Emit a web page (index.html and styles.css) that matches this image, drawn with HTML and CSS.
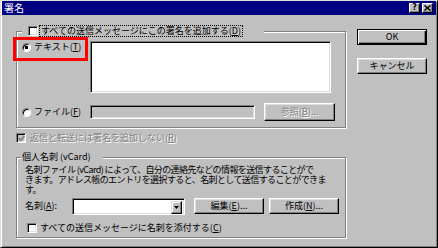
FILE: index.html
```html
<!DOCTYPE html>
<html lang="ja">
<head>
<meta charset="utf-8">
<title>署名</title>
<link rel="stylesheet" href="styles.css">
</head>
<body>
<div class="window">
  <div class="titlebar">
    <span class="title">署名</span>
    <div class="tbtns">
      <span class="tbtn">?</span>
      <span class="tbtn"><svg width="7" height="6" viewBox="0 0 7 6"><path d="M0.5 0.5 L6.5 5.5 M6.5 0.5 L0.5 5.5" stroke="#000" stroke-width="1.5" fill="none"/></svg></span>
    </div>
  </div>
  <div class="main">
    <div class="left">
      <fieldset class="group g1">
        <legend class="lg1"><span class="chk"></span><span class="focus">すべての送信メッセージにこの署名を追加する(<u>D</u>)</span></legend>
        <div class="g1grid">
          <div class="opt opt-top"><span class="radio on"></span>テキスト(<u>T</u>)</div>
          <div class="textbox"></div>
          <div class="opt"><span class="radio"></span>ファイル(<u>F</u>)</div>
          <div class="filerow">
            <div class="filefield"></div>
            <div class="btn browse dis">参照(<u>B</u>)...</div>
          </div>
        </div>
      </fieldset>
      <div class="chkrow dis reply"><span class="chk checked"><svg width="7" height="7" viewBox="0 0 7 7"><path d="M0.5 3 L2.7 5.3 L6.5 1" stroke="#808080" stroke-width="1.6" fill="none"/></svg></span>返信と転送には署名を追加しない(<u>R</u>)</div>
      <fieldset class="group g2">
        <legend class="lg2">個人名刺 (vCard)</legend>
        <div class="desc">
          <div class="dl">名刺ファイル (vCard) によって、自分の連絡先などの情報を送信することがで</div>
          <div class="dl">きます。アドレス帳のエントリを選択すると、名刺として送信することができま</div>
          <div class="dl">す。</div>
        </div>
        <div class="cardrow">
          <span class="cardlabel">名刺(<u>A</u>):</span>
          <div class="combo"><span class="arrow"><svg width="5" height="3" viewBox="0 0 5 3"><path d="M0 0 H5 L2.5 3 Z" fill="#000"/></svg></span></div>
          <div class="btn small edit">編集(<u>E</u>)...</div>
          <div class="btn small">作成(<u>N</u>)...</div>
        </div>
        <div class="chkrow attach"><span class="chk"></span>すべての送信メッセージに名刺を添付する(<u>C</u>)</div>
      </fieldset>
    </div>
    <div class="right">
      <div class="btn default">OK</div>
      <div class="btn">キャンセル</div>
    </div>
  </div>
  <div class="annot"></div>
</div>
</body>
</html>
```

FILE: styles.css
```css
* { box-sizing: border-box; }
html, body { margin: 0; background: #c0c0c0; }
body {
  font-family: "Noto Sans CJK JP", "Noto Sans", sans-serif;
  font-size: 9px;
  line-height: 12px;
  color: #000;
}
u { text-decoration: underline; text-underline-offset: 1px; text-decoration-thickness: 1px; }

.window {
  position: relative;
  width: 438px;
  height: 248px;
  background: #c0c0c0;
  border: 1px solid;
  border-color: #dfdfdf #000 #000 #dfdfdf;
  box-shadow: inset 1px 1px #fff, inset -1px -1px #808080;
  padding: 0 1px 1px 1px;
}

.titlebar {
  height: 14px;
  background: #000080;
  display: flex;
  align-items: center;
  justify-content: space-between;
  padding: 0 3px 0 2px;
}
.title { color: #fff; font-size: 10px; line-height: 12px; }
.tbtns { display: flex; gap: 2px; }
.tbtn {
  width: 11px;
  height: 10px;
  background: #c0c0c0;
  border: 1px solid;
  border-color: #fff #000 #000 #fff;
  box-shadow: inset -1px -1px #808080;
  display: flex;
  align-items: center;
  justify-content: center;
  font: bold 8px/8px "DejaVu Sans", sans-serif;
}

.main { display: flex; padding: 10px 0 0 14px; }
.left { width: 331px; }
.right {
  margin-left: 10px;
  padding-top: 4px;
  display: flex;
  flex-direction: column;
  gap: 13px;
}

.btn {
  width: 70px;
  height: 16px;
  background: #c0c0c0;
  border: 1px solid;
  border-color: #fff #000 #000 #fff;
  box-shadow: inset -1px -1px #808080, inset 1px 1px #dfdfdf;
  display: flex;
  align-items: center;
  justify-content: center;
  white-space: nowrap;
}
.btn.default {
  border: 1px solid #000;
  box-shadow: inset 1px 1px #fff, inset -1px -1px #000, inset -2px -2px #808080;
}
.dis { color: #808080; text-shadow: 1px 1px #fff; }

.group {
  margin: 0;
  border: 1px solid #808080;
  box-shadow: inset 1px 1px #fff, 1px 1px #fff;
  min-width: 0;
  width: 330px;
}
.g1 { padding: 4px 0 6px 5px; }
.lg1 {
  padding: 0 22px 0 6px;
  height: 12px;
  display: flex;
  align-items: center;
  background: #c0c0c0;
}
.focus { outline: 1px dotted #000; outline-offset: 0; margin-left: 2px; padding: 0 1px; line-height: 10px; }

.chk {
  flex: none;
  width: 10px;
  height: 10px;
  background: #fff;
  border: 1px solid;
  border-color: #808080 #fff #fff #808080;
  box-shadow: inset 1px 1px #000, inset -1px -1px #dfdfdf;
  display: inline-flex;
  align-items: center;
  justify-content: center;
}
.chk.checked { background: #c0c0c0; }

.radio {
  flex: none;
  width: 9px;
  height: 9px;
  border-radius: 50%;
  border: 1px solid;
  border-color: #808080 #fff #fff #808080;
  box-shadow: inset 1px 1px #000;
  background: #fff;
  margin-right: 3px;
}
.radio.on { background: radial-gradient(circle, #000 0 1.5px, #fff 2px); }

.g1grid {
  display: grid;
  grid-template-columns: 68px 241px;
  row-gap: 10px;
}
.opt { display: flex; align-items: center; height: 12px; align-self: center; }
.opt-top { align-self: start; }
.textbox {
  height: 52px;
  background: #fff;
  border: 1px solid;
  border-color: #808080 #fff #fff #808080;
  box-shadow: inset 1px 1px #000, inset -1px -1px #dfdfdf;
}
.filerow { display: flex; align-items: center; height: 18px; width: 250px; }
.filefield {
  width: 165px;
  height: 14px;
  background: #c0c0c0;
  border: 1px solid;
  border-color: #808080 #fff #fff #808080;
  box-shadow: inset 1px 1px #000, inset -1px -1px #dfdfdf;
}
.browse { margin-left: 9px; width: 71px; height: 18px; }

.chkrow { display: flex; align-items: center; height: 12px; white-space: nowrap; }
.reply { margin-top: 4px; }
.reply .chk { margin-right: 4px; }

.g2 { margin-top: 7px; padding: 2px 0 3px 8px; }
.lg2 { margin-left: -4px; padding: 0 12px 0 1px; height: 12px; line-height: 12px; background: #c0c0c0; }
.desc { display: flex; flex-direction: column; letter-spacing: -0.6px; }
.dl { height: 10px; line-height: 10px; white-space: nowrap; }

.cardrow { display: flex; align-items: center; height: 18px; margin-top: 2px; }
.cardlabel { width: 47px; }
.combo {
  width: 113px;
  height: 17px;
  background: #fff;
  border: 1px solid;
  border-color: #808080 #fff #fff #808080;
  box-shadow: inset 1px 1px #000, inset -1px -1px #dfdfdf;
  display: flex;
  justify-content: flex-end;
  padding: 2px;
}
.arrow {
  width: 11px;
  height: 13px;
  background: #c0c0c0;
  border: 1px solid;
  border-color: #dfdfdf #000 #000 #dfdfdf;
  box-shadow: inset -1px -1px #808080, inset 1px 1px #fff;
  display: flex;
  align-items: center;
  justify-content: center;
}
.small { height: 16px; }
.edit { margin-left: 9px; margin-right: 5px; }

.attach { margin-top: 7px; }
.attach .chk { margin-left: 2px; margin-right: 3px; }

.annot {
  position: absolute;
  left: 12px;
  top: 36px;
  width: 75px;
  height: 24px;
  border: 3px solid #ff0000;
}
```
